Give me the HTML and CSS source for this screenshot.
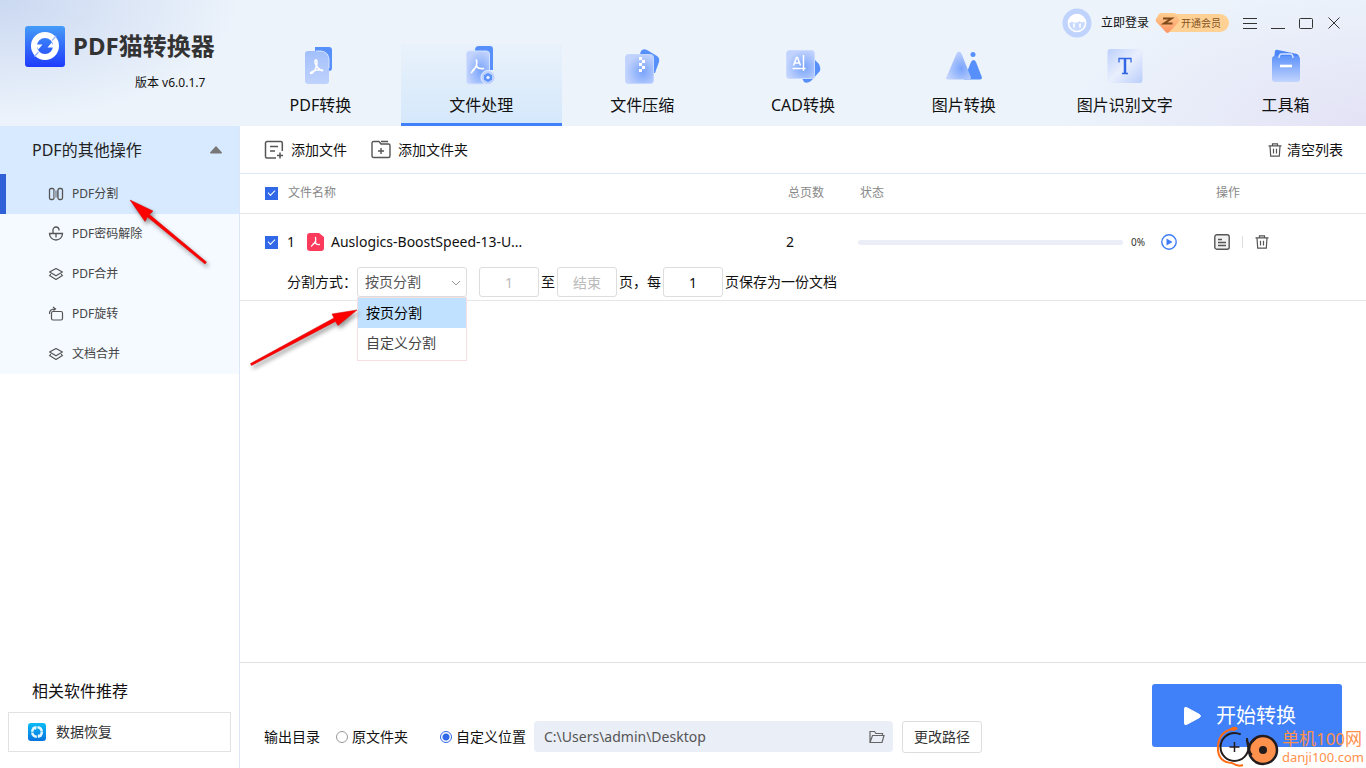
FILE: index.html
```html
<!DOCTYPE html>
<html lang="zh-CN">
<head>
<meta charset="utf-8">
<title>PDF猫转换器</title>
<link rel="stylesheet" href="styles.css">
</head>
<body>
<svg class="defs" aria-hidden="true">
  <defs>
    <radialGradient id="glow" cx=".62" cy=".6" r=".6"><stop offset="0" stop-color="#79a4fb"/><stop offset="1" stop-color="#c0d2fd"/></radialGradient>
    <linearGradient id="page" x1="0" y1="0" x2="0" y2="1"><stop offset="0" stop-color="#a3c0fc"/><stop offset="1" stop-color="#bfd2fc"/></linearGradient>
    <linearGradient id="bag" x1="0" y1="0" x2="0" y2="1"><stop offset="0" stop-color="#5f93fa"/><stop offset="1" stop-color="#c2d5fd"/></linearGradient>
    <linearGradient id="logo" x1="0" y1="0" x2="0" y2="1"><stop offset="0" stop-color="#459cf8"/><stop offset="1" stop-color="#1f3bfc"/></linearGradient>
    <linearGradient id="gem" x1="0" y1="0" x2="0" y2="1"><stop offset="0" stop-color="#ffd08f"/><stop offset="1" stop-color="#ff9365"/></linearGradient>
    <linearGradient id="tile" x1="0" y1="0" x2="1" y2="1"><stop offset="0" stop-color="#bccffb"/><stop offset=".5" stop-color="#e9effd"/><stop offset="1" stop-color="#b9cdfb"/></linearGradient>
    <linearGradient id="rescue" x1="0" y1="0" x2="0" y2="1"><stop offset="0" stop-color="#09bdf7"/><stop offset="1" stop-color="#0872dd"/></linearGradient>
    <g id="layers" fill="none" stroke="#555" stroke-width="1.2" stroke-linejoin="round"><path d="M8 2.5L14.4 6 8 9.8 1.6 6z"/><path d="M2.8 8L1.6 9.6 8 13.5l6.4-3.9L13.2 8"/></g>
    <g id="trash" fill="none" stroke="#555" stroke-width="1.2"><path d="M1.5 3.8h13M5.5 3.6V1.8h5v1.800M3 4l.7 10.200h8.600L13 4M6.500 6.800v4.700M9.500 6.800v4.700"/></g>
  </defs>
</svg>

<header class="header">
  <div class="brand">
    <svg class="logo" viewBox="0 0 40 41"><rect width="40" height="41" rx="3" fill="url(#logo)"/><circle cx="20" cy="20" r="11" fill="none" stroke="#fff" stroke-width="6"/><path d="M11 18.500h6.500l-4.200 5zM29 21.500h-6.500l4.200-5z" fill="#fff"/><path d="M27 14.500l4-4.500M9.500 30.500l4-4.500" stroke="#9fbdfb" stroke-width="1.500"/></svg>
    <h1 class="brand-name">PDF猫转换器</h1>
    <p class="version">版本 v6.0.1.7</p>
  </div>
  <div class="account">
    <svg class="avatar" viewBox="0 0 30 30"><circle cx="15" cy="15" r="14.500" fill="#bfd3fd"/><circle cx="15" cy="15" r="8.600" fill="#c9dafe" stroke="#fff" stroke-width="1.500"/><path d="M6.400 14.500a8.600 8.600 0 0 1 17.200 0l-1.800-.8c-1.500 1.300-3.800.3-4.300-.7-1 2-6.500 2.200-8 .5-.5 1.200-1.500 1.800-3.100 1z" fill="#fff"/><path d="M12 16v3M18 16v3" stroke="#fff" stroke-width="1.600" stroke-linecap="round"/></svg>
    <a class="login" href="#">立即登录</a>
    <button class="vip" type="button">
      <svg class="gem" viewBox="0 0 25 22"><path d="M6 1h13q1.500 0 2.500 1.500L24 7q1 1.500-.3 3L14 20.300q-1.500 1.500-3 0L1.300 10Q0 8.500 1 7l2.500-4.500Q4.500 1 6 1z" fill="url(#gem)"/><path d="M8 6.500h8.500L9 11.500H17.500" fill="none" stroke="#7d4a1c" stroke-width="2"/></svg>
      <span>开通会员</span>
    </button>
    <div class="window-buttons">
      <button type="button" aria-label="菜单"><svg viewBox="0 0 14 14"><path d="M0 2.500h14M0 7.500h14M0 12.500h14"/></svg></button>
      <button type="button" aria-label="最小化"><svg viewBox="0 0 14 14"><path d="M0 12.500h14"/></svg></button>
      <button type="button" aria-label="最大化"><svg viewBox="0 0 14 14"><rect x=".5" y="2.500" width="13" height="10" rx="1"/></svg></button>
      <button type="button" aria-label="关闭"><svg viewBox="0 0 14 14"><path d="M1.500 1.500l11 11M12.500 1.500l-11 11"/></svg></button>
    </div>
  </div>
  <nav class="tabs">
    <a class="tab" href="#"><svg viewBox="0 0 40 40"><path d="M15 1h14a3 3 0 0 1 3 3v18a3 3 0 0 1-3 3H15z" fill="#5790fb"/><path d="M8 5h13q8 1 8 9v21a3 3 0 0 1-3 3H8a3 3 0 0 1-3-3V8a3 3 0 0 1 3-3z" fill="url(#page)"/><path d="M16 5h5q8 1 8 9v8" fill="none" stroke="#d4e2ff"/><path d="M15.500 14c1.500-1 2 3 1 6-1.200 3.700-3.500 7-5.500 7.500-2-.5 4-4.500 11.300-3.500 1.500 1-2 1.700-5.800-4-1.500-2.500-2-5-1-6z" fill="none" stroke="#fff" stroke-width="1.500"/></svg><span>PDF转换</span></a>
    <a class="tab active" href="#" aria-current="page"><svg viewBox="0 0 40 40"><path d="M14 4a4 4 0 0 1 4-4h11a3 3 0 0 1 3 3v21H16z" fill="#5790fb"/><rect x="5.500" y="5" width="23" height="33" rx="3" fill="url(#glow)" stroke="#d2e1fe"/><path d="M15.500 14c1 4 .2 7-5 12.500M16 21c2 2 4 2 6.500 1.500M12 24l4-4" fill="none" stroke="#fff" stroke-width="1.700" stroke-linecap="round"/><circle cx="27" cy="31.500" r="7" fill="#bcd1fd" stroke="#e3edff"/><path d="M27 27l4 2.300v4.500L27 36l-4-2.200v-4.500z" fill="#5a91fb"/><circle cx="27" cy="31.500" r="1.700" fill="#e3edff"/></svg><span>文件处理</span></a>
    <a class="tab" href="#"><svg viewBox="0 0 40 40"><path d="M18 8l1-3q2-3 6-1l10 6q3 2 2 6l-4 11H18z" fill="#5790fb"/><rect x="3.500" y="8.500" width="28" height="29" rx="3" fill="url(#glow)" stroke="#c3d6ff"/><path d="M17 11h3v3h-3zM20 14h3v3h-3zM17 17h3v3h-3zM20 20h3v3h-3zM17 23h3v3h-3z" fill="#fff"/></svg><span>文件压缩</span></a>
    <a class="tab" href="#"><svg viewBox="0 0 40 40"><path d="M30 12l6 6q2 4 1 7l-9 10q-4 3-7 1l-4-8z" fill="#5790fb"/><rect x="3.500" y="4.500" width="28" height="28" rx="3" fill="url(#glow)" stroke="#c9dbff"/><path d="M10.500 19.500l3-8h1l3 8M12 17h4M20.500 9v16M9.500 22.500h13" fill="none" stroke="#fff" stroke-width="1.500"/></svg><span>CAD转换</span></a>
    <a class="tab" href="#"><svg viewBox="0 0 40 40"><circle cx="29" cy="8.500" r="2.500" fill="#5790fb"/><path d="M27 16q2.500-4 5 0L38 31.500q0 2-2 2H20z" fill="#5790fb"/><path d="M12.500 7.500q2.500-4 5 0L27 31.500q0 2-2 2H4.500Q1 33.500 2.500 31z" fill="url(#glow)"/></svg><span>图片转换</span></a>
    <a class="tab" href="#"><svg viewBox="0 0 40 40"><rect x="2.500" y="3" width="35" height="34" rx="3" fill="url(#tile)"/><path d="M14 16.500v-4h12v4M17 27.500h6" fill="none" stroke="#3467e4" stroke-width="1.300"/><path d="M20 12.500v15" stroke="#3467e4" stroke-width="2.500"/></svg><span>图片识别文字</span></a>
    <a class="tab" href="#"><svg viewBox="0 0 40 40"><path d="M8 13l1-8q1-2 3-1l19 4q2 1 2 3v6z" fill="#4c86f8"/><rect x="6" y="10" width="28" height="26" rx="3" fill="url(#bag)"/><path d="M13 12q0-4 3-4h8q3 0 3 4" fill="none" stroke="#d6e4ff" stroke-width="1.500"/><path d="M14 20h12" stroke="#fff" stroke-width="2.600"/></svg><span>工具箱</span></a>
  </nav>
</header>

<div class="body">
  <aside class="sidebar">
    <nav class="side-nav">
      <button class="side-title" type="button"><span>PDF的其他操作</span><svg viewBox="0 0 12 8"><path d="M6 0l6 6.500q0 1-1 1H1Q0 7.500 0 6.500z" fill="#777"/></svg></button>
      <a class="side-item current" href="#"><svg viewBox="0 0 16 16" fill="none" stroke="#555" stroke-width="1.300"><rect x="1.500" y="2.500" width="4.500" height="11" rx="1.500"/><path d="M6 4.500h4v7H6z" fill="#9aa5b3" stroke="none"/><rect x="10" y="2.500" width="4.500" height="11" rx="1.500"/></svg>PDF分割</a>
      <a class="side-item" href="#"><svg viewBox="0 0 16 16" fill="none" stroke="#555" stroke-width="1.300"><path d="M1.500 7.500h13a6.500 6.500 0 0 1-13 0zM5 7V4a3 3 0 0 1 6 0v.5M8 8v3.500"/></svg>PDF密码解除</a>
      <a class="side-item" href="#"><svg viewBox="0 0 16 16"><use href="#layers"/></svg>PDF合并</a>
      <a class="side-item" href="#"><svg viewBox="0 0 16 16" fill="none" stroke="#555" stroke-width="1.200"><rect x="3.500" y="5.500" width="11" height="8.500" rx="1.500"/><path d="M1.500 8Q1 3 7.500 3M5 1l2.500 2L5.500 4.500"/></svg>PDF旋转</a>
      <a class="side-item" href="#"><svg viewBox="0 0 16 16"><use href="#layers"/></svg>文档合并</a>
    </nav>
    <section class="related">
      <h2>相关软件推荐</h2>
      <a class="related-link" href="#"><svg viewBox="0 0 18 18"><rect width="18" height="18" rx="3" fill="url(#rescue)"/><circle cx="9" cy="9" r="4.800" fill="none" stroke="#e4f7ff" stroke-width="2.500" stroke-dasharray="6.500 1"/><path d="M4 4h4v3zM14 14h-4v-3z" fill="#e4f7ff"/></svg>数据恢复</a>
    </section>
  </aside>

  <main class="content">
    <div class="toolbar">
      <button type="button"><svg class="icon-add" viewBox="0 0 20 20" fill="none" stroke="#555" stroke-width="1.500"><path d="M18.300 11V3a1.500 1.500 0 0 0-1.500-1.500H3A1.500 1.500 0 0 0 1.500 3v13.500A1.500 1.500 0 0 0 3 18h9M6 6.500h8M6 11h5M13 15.500h6M16 12.500v6"/></svg>添加文件</button>
      <button type="button"><svg class="icon-add" viewBox="0 0 20 20" fill="none" stroke="#555" stroke-width="1.400"><path d="M1 16V3a1.500 1.500 0 0 1 1.500-1.500H8L10 4h7.500A1.500 1.500 0 0 1 19 5.500V16a1.500 1.500 0 0 1-1.500 1.500h-15A1.500 1.500 0 0 1 1 16zM10 1.500h7M7 11h6M10 8v6"/></svg>添加文件夹</button>
      <button class="clear" type="button"><svg viewBox="0 0 16 16"><use href="#trash"/></svg>清空列表</button>
    </div>

    <div class="list">
      <table class="files">
        <colgroup><col class="col-name"><col class="col-pages"><col class="col-status"><col class="col-ops"></colgroup>
        <thead>
          <tr>
            <th><label class="check-label"><input class="check" type="checkbox" checked>文件名称</label></th>
            <th>总页数</th><th>状态</th><th>操作</th>
          </tr>
        </thead>
        <tbody>
          <tr class="file">
            <td><label class="check-label file-name"><input class="check" type="checkbox" checked><span>1</span><svg viewBox="0 0 17 18"><path d="M3 0h9l5 4v11a3 3 0 0 1-3 3H3a3 3 0 0 1-3-3V3a3 3 0 0 1 3-3z" fill="#fb3a5c"/><path d="M8.500 4.500c.8 3 0 5.500-4 8.500M8 10q2 2 4.500 1.500M6 11l3-2" fill="none" stroke="#fff" stroke-width="1.300" stroke-linecap="round"/></svg>Auslogics-BoostSpeed-13-U...</label></td>
            <td>2</td>
            <td><div class="status"><progress value="0" max="100" aria-label="进度"></progress><span>0%</span><button type="button" aria-label="开始"><svg viewBox="0 0 16 16"><circle cx="8" cy="8" r="7.200" fill="none" stroke="#3f7cf6" stroke-width="1.400"/><path d="M5.500 4.500L11.500 8l-6 3.500z" fill="#3f7cf6"/></svg></button></div></td>
            <td><div class="ops"><button type="button" aria-label="详情"><svg viewBox="0 0 16 16" fill="none" stroke="#555" stroke-width="1.400"><rect x=".8" y=".8" width="14.400" height="14.400" rx="2" fill="#f1f1f1"/><path d="M4 5.500h4M4 8.500h8M4 11.500h8"/></svg></button><button type="button" aria-label="删除"><svg viewBox="0 0 16 16"><use href="#trash"/></svg></button></div></td>
          </tr>
          <tr class="options">
            <td colspan="4">
              <div class="split">
                <label for="mode">分割方式：</label>
                <div class="select-box">
                  <select id="mode"><option>按页分割</option><option>自定义分割</option></select>
                  <svg class="chevron" viewBox="0 0 10 6"><path d="M1 1l4 4 4-4" fill="none" stroke="#999"/></svg>
                  <ul class="menu"><li class="picked">按页分割</li><li>自定义分割</li></ul>
                </div>
                <input id="from" type="text" placeholder="1" aria-label="起始页">
                <label for="to">至</label>
                <input id="to" type="text" placeholder="结束">
                <label for="every">页，每</label>
                <input id="every" type="text" value="1">
                <span>页保存为一份文档</span>
              </div>
            </td>
          </tr>
        </tbody>
      </table>
    </div>

    <footer class="footer">
      <span>输出目录</span>
      <label class="choice"><input type="radio" name="dir">原文件夹</label>
      <label class="choice custom"><input type="radio" name="dir" checked>自定义位置</label>
      <div class="path">
        <input type="text" value="C:\Users\admin\Desktop" aria-label="输出路径">
        <button type="button" aria-label="打开文件夹"><svg viewBox="0 0 16 14" fill="none" stroke="#666" stroke-width="1.200"><path d="M1 12.500V1.500h4.500l1.500 2h6.500v2M1 12.500L3.500 5.500H15L13 12.500z"/></svg></button>
      </div>
      <button class="change" type="button">更改路径</button>
      <button class="start" type="button"><svg viewBox="0 0 18 20"><path d="M3 1.500L16 8.500q2 1.500 0 3L3 18.500Q1 19.500 1 17V3q0-2.500 2-1.500z" fill="#fff" stroke="#fff"/></svg>开始转换</button>
    </footer>
  </main>
</div>

<svg class="pointer pointer-item" viewBox="0 0 84 74"><path d="M3 4L26 15 22.500 18.500 79.500 66 78 68 20.500 21 18 25.500z" fill="#fe0000" stroke="#d00000" stroke-width=".5"/></svg>
<svg class="pointer pointer-menu" viewBox="0 0 114 66"><path d="M109 5L84 9 86 13 2.500 58.500 3.500 60.500 87.500 16.500 90 20.500z" fill="#fe0000" stroke="#d00000" stroke-width=".5"/></svg>

<div class="watermark">
  <svg viewBox="0 0 64 42"><path d="M21 2Q3 4 2 20T16 37q6 4 11 2" fill="none" stroke="#ff6a13" stroke-width="2"/><path d="M13 4q5-6 9-1l-4 2z" fill="#ff6a13"/><circle cx="18.500" cy="21" r="14" fill="none" stroke="#241c1c" stroke-width="2" stroke-dasharray="72 8"/><path d="M18.500 16v10M13.500 21h10" stroke="#241c1c" stroke-width="1.500"/><circle cx="47" cy="24" r="14" fill="#ff914d" stroke="#241c1c" stroke-width="2.500"/><circle cx="47" cy="24" r="4" fill="#241c1c"/><path d="M31 12q1 14 5 17M35 17l5-5" fill="none" stroke="#241c1c" stroke-width="2"/></svg>
  <p><span class="mark-name">单机100网</span><span class="mark-site">danji100.com</span></p>
</div>
</body>
</html>
```
FILE: styles.css
```css
* { box-sizing: border-box; }
body {
  margin: 0;
  min-height: 100vh;
  display: flex;
  flex-direction: column;
  position: relative;
  overflow: hidden;
  background: #fff;
  color: #111;
  font: 14px/20px "Noto Sans", "Noto Sans CJK SC", sans-serif;
}
h1, h2, p, ul { margin: 0; padding: 0; font-weight: 400; }
a { color: inherit; text-decoration: none; }
button, input, select { font: inherit; color: inherit; }
button { border: 0; padding: 0; background: none; display: flex; align-items: center; }
svg { display: block; flex: none; }
.defs { position: absolute; width: 0; height: 0; }

.header {
  display: grid;
  grid-template-columns: 240px 1fr;
  grid-template-rows: 44px 82px;
  background:
    radial-gradient(ellipse 240px 120px at 0 0, #cad8f1, transparent),
    radial-gradient(ellipse 300px 140px at 100% 100%, #e3e2f5, transparent),
    #ecf3fb;
}
.brand {
  grid-row: 1 / 3;
  display: grid;
  grid-template-columns: 40px auto;
  grid-template-rows: 42px 20px;
  column-gap: 8px;
  row-gap: 6px;
  justify-content: start;
  align-items: center;
  align-content: start;
  padding: 25px 0 0 25px;
}
.logo { width: 40px; height: 41px; }
.brand-name { font-size: 24px; line-height: 40px; font-weight: 700; color: #333; }
.version { grid-column: 2; font-size: 12px; padding-left: 62px; }
.account { display: flex; align-items: center; justify-content: flex-end; padding: 2px 25px 0 0; font-size: 12px; }
.avatar { width: 30px; height: 30px; margin-right: 9px; }
.vip {
  height: 18px;
  margin: 0 14px 0 12px;
  padding-right: 8px;
  border-radius: 9px;
  background: #ffd195;
  color: #83531f;
  font-size: 10px;
}
.gem { width: 25px; height: 22px; margin-left: -6px; margin-right: 1px; }
.window-buttons { display: flex; gap: 14px; }
.window-buttons svg { width: 14px; height: 14px; fill: none; stroke: #333; }
.tabs { display: grid; grid-template-columns: repeat(7, 1fr); font-size: 16px; }
.tab { display: flex; flex-direction: column; align-items: center; gap: 7px; padding-top: 2px; border-bottom: 3px solid transparent; line-height: 24px; }
.tab svg { width: 40px; height: 40px; }
.active { background: linear-gradient(#e9f2fb, #d5e8fb); border-bottom-color: #4081f8; }

.body { flex: 1; display: flex; }
.sidebar { width: 240px; flex: none; display: flex; flex-direction: column; border-right: 1px solid #dde6f7; }
.side-nav { background: #f4faff; }
.side-title { width: 100%; height: 48px; padding: 0 17px 0 32px; justify-content: space-between; background: #d8eaff; font-size: 16px; color: #222; }
.side-title svg { width: 12px; height: 8px; }
.side-item { display: flex; align-items: center; gap: 8px; height: 40px; padding-left: 48px; font-size: 12px; color: #444; }
.side-item svg { width: 16px; height: 16px; }
.current { background: #d8eaff; border-left: 6px solid #3060d8; padding-left: 42px; }
.related { margin-top: auto; padding: 0 8px 16px; }
.related h2 { padding-left: 24px; font-size: 16px; line-height: 24px; margin-bottom: 9px; }
.related-link { display: flex; align-items: center; gap: 10px; height: 40px; padding-left: 19px; border: 1px solid #e2e2e2; color: #333; }
.related-link svg { width: 18px; height: 18px; }

.content { flex: 1; min-width: 0; display: flex; flex-direction: column; }
.toolbar { display: flex; gap: 24px; height: 48px; padding: 0 23px 0 24px; border-bottom: 1px solid #dde6f7; }
.toolbar button { gap: 7px; }
.icon-add { width: 20px; height: 20px; }
.toolbar .clear { margin-left: auto; gap: 4px; }
.clear svg, .ops svg, .status svg { width: 16px; height: 16px; }
.list { flex: 1; }
.files { width: 100%; table-layout: fixed; border-collapse: collapse; }
.col-pages { width: 72px; }
.col-status { width: 356px; }
.col-ops { width: 152px; }
.files th, .files td { padding: 0; text-align: left; font-weight: 400; }
.files th { height: 39px; border-bottom: 1px solid #e6e6e6; font-size: 12px; color: #888; }
.files th + th { padding-left: 2px; }
.files .file td { height: 49px; padding-top: 9px; }
.check-label { display: flex; align-items: center; gap: 10px; padding-left: 25px; }
.check {
  appearance: none;
  width: 13px;
  height: 13px;
  margin: 0;
  display: grid;
  place-items: center;
  background: #3168e8;
}
.check::after { content: ""; width: 6px; height: 3px; border: solid #fff; border-width: 0 0 1px 1px; transform: rotate(-45deg); margin-bottom: 2px; }
.file-name { gap: 9px; }
.file-name span { width: 11px; }
.file-name svg { width: 17px; height: 18px; margin-right: -2px; }
.status { display: flex; align-items: center; }
.status progress { appearance: none; width: 265px; height: 5px; border: 0; border-radius: 3px; overflow: hidden; background: #ebedf7; }
.status progress::-webkit-progress-bar { background: #ebedf7; }
.status progress::-webkit-progress-value { background: #4081f8; }
.status span { width: 30px; margin: 0 0 0 8px; font-size: 10px; color: #333; }
.ops { display: flex; align-items: center; }
.ops button + button { margin-left: 12px; padding-left: 12px; background: linear-gradient(#ddd, #ddd) left center / 1px 12px no-repeat; }
.options td { border-bottom: 1px solid #e6e6e6; }
.split { display: flex; align-items: center; height: 38px; padding: 2px 0 0 47px; }
.split input, .split select { height: 30px; border: 1px solid #ddd; border-radius: 3px; background: #fff; }
.split input { width: 60px; margin: 0 2px; padding: 0; text-align: center; }
.split input::placeholder { color: #bbb; opacity: 1; }
.select-box { position: relative; margin-right: 10px; }
.split select { display: block; appearance: none; width: 110px; padding: 0 7px; color: #555; }
.chevron { position: absolute; right: 6px; top: 13px; width: 10px; height: 6px; }
.menu { position: absolute; top: 30px; left: 0; width: 110px; padding-bottom: 2px; border: 1px solid #f5dfe0; background: #fff; list-style: none; }
.menu li { padding: 5px 8px; color: #444; }
.menu .picked { background: #c0e1ff; color: #000; }

.footer { display: flex; align-items: center; min-height: 106px; padding: 0 24px 0 24px; border-top: 1px solid #e2e2e2; }
.footer > * { margin-top: 42px; }
.choice { display: flex; align-items: center; gap: 4px; margin-left: 16px; }
.custom { margin-left: 32px; }
.choice input {
  appearance: none;
  width: 12px;
  height: 12px;
  margin: 0;
  border: 1px solid #999;
  border-radius: 50%;
}
.choice input:checked { border-color: #3168e8; background: radial-gradient(circle, #3168e8 3px, #fff 4px); }
.path { flex: 0 1 359px; display: flex; align-items: center; height: 31px; margin-left: 8px; padding: 0 8px 0 10px; border-radius: 4px; background: #eaeef7; color: #555; }
.path input { flex: 1; min-width: 0; padding: 0; border: 0; background: none; }
.path svg { width: 16px; height: 14px; }
.change { height: 32px; margin-left: 9px; padding: 0 11px; border: 1px solid #ddd; border-radius: 3px; color: #333; }
.start { width: 190px; height: 63px; margin: 0 0 0 auto; padding-left: 31px; gap: 14px; border-radius: 3px; background: #4080f9; color: #fff; font-size: 20px; }
.start svg { width: 19px; height: 20px; }

.pointer { position: absolute; filter: drop-shadow(2px 3px 2px rgba(0, 0, 0, .4)); pointer-events: none; }
.pointer-item { left: 127px; top: 196px; width: 84px; height: 74px; }
.pointer-menu { left: 248px; top: 305px; width: 114px; height: 66px; }
.watermark { position: absolute; right: 2px; bottom: 0; display: flex; align-items: center; gap: 2px; color: #ff914d; pointer-events: none; }
.watermark svg { width: 64px; height: 42px; }
.watermark span { display: block; }
.mark-name { font-size: 17px; line-height: 20px; }
.mark-site { font-size: 13px; line-height: 17px; }
```
